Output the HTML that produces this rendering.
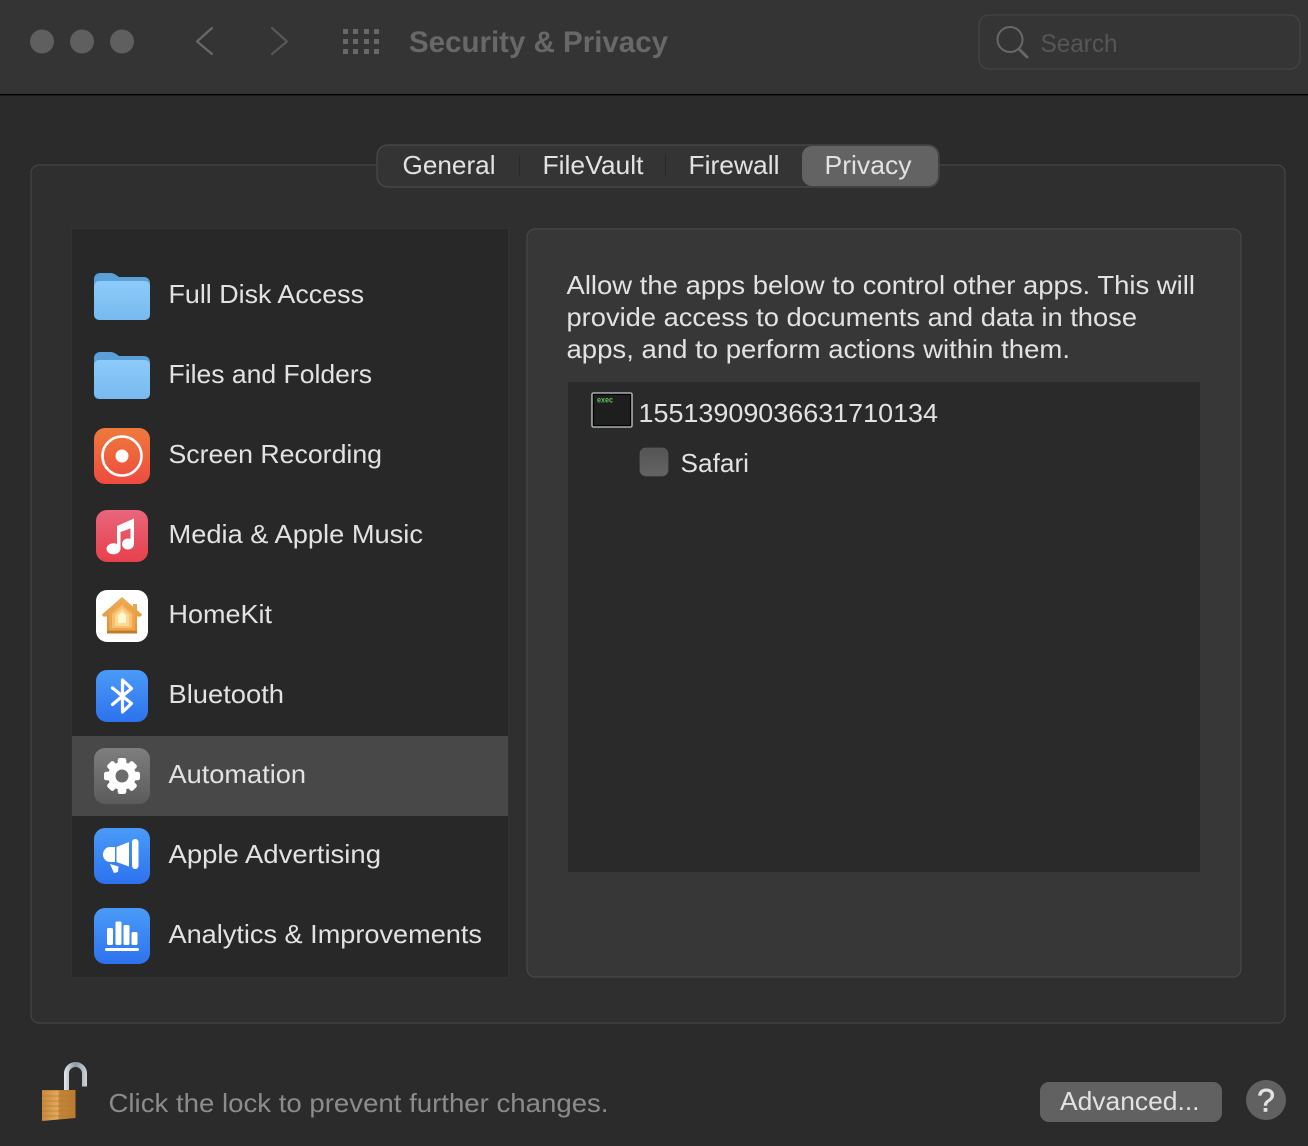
<!DOCTYPE html>
<html><head><meta charset="utf-8"><style>
html,body{margin:0;padding:0;background:#2a2a2a;width:1308px;height:1146px;overflow:hidden}
svg{display:block}
text{font-family:"Liberation Sans",sans-serif;font-size:26px;fill:#e2e2e2}
</style></head><body>
<svg width="1308" height="1146" viewBox="0 0 1308 1146" xmlns="http://www.w3.org/2000/svg">
<defs>
<linearGradient id="fold" x1="0" y1="0" x2="0" y2="1"><stop offset="0" stop-color="#8ccbfa"/><stop offset="1" stop-color="#77baef"/></linearGradient>
<linearGradient id="rec" x1="0" y1="0" x2="0" y2="1"><stop offset="0" stop-color="#ee7a3c"/><stop offset="1" stop-color="#ee4b40"/></linearGradient>
<linearGradient id="mus" x1="0" y1="0" x2="0" y2="1"><stop offset="0" stop-color="#e9667c"/><stop offset="1" stop-color="#e8404c"/></linearGradient>
<linearGradient id="blu" x1="0" y1="0" x2="0" y2="1"><stop offset="0" stop-color="#4a9bf8"/><stop offset="1" stop-color="#2d72ee"/></linearGradient>
<linearGradient id="gear" x1="0" y1="0" x2="0" y2="1"><stop offset="0" stop-color="#7e7e7e"/><stop offset="1" stop-color="#5b5b5b"/></linearGradient>
<linearGradient id="home" x1="0" y1="0" x2="0" y2="1"><stop offset="0" stop-color="#f0ac56"/><stop offset="1" stop-color="#dc9136"/></linearGradient>
<linearGradient id="lockb" x1="0" y1="0" x2="1" y2="0"><stop offset="0" stop-color="#c98a3c"/><stop offset=".47" stop-color="#e2aa5e"/><stop offset=".52" stop-color="#c48539"/><stop offset="1" stop-color="#b97b31"/></linearGradient>
<linearGradient id="shack" x1="0" y1="0" x2="1" y2="0"><stop offset="0" stop-color="#e4eaef"/><stop offset=".5" stop-color="#8d9aa5"/><stop offset="1" stop-color="#cdd5da"/></linearGradient>
<linearGradient id="chk" x1="0" y1="0" x2="0" y2="1"><stop offset="0" stop-color="#545454"/><stop offset="1" stop-color="#646464"/></linearGradient>
<g id="folder">
<path d="M0 6a6 6 0 0 1 6-6h10c3 0 5 1 7 2.500l2 1.500h25a6 6 0 0 1 6 6v30H0z" fill="#5a9fd8"/>
<rect x="0" y="8" width="56" height="39" rx="5" fill="url(#fold)"/>
</g>
</defs>

<rect width="1308" height="1146" fill="#2b2b2b"/>
<rect width="1308" height="94" fill="#343434"/>
<rect y="94" width="1308" height="1.4" fill="#000"/>

<circle cx="42" cy="41.500" r="12" fill="#5f5f5f"/>
<circle cx="82" cy="41.500" r="12" fill="#5f5f5f"/>
<circle cx="122" cy="41.500" r="12" fill="#5f5f5f"/>
<path d="M212 28 197 41.500 212 54" fill="none" stroke="#686868" stroke-width="2.200" stroke-linecap="round" stroke-linejoin="round"/>
<path d="M272 28 287 41.500 272 54" fill="none" stroke="#575757" stroke-width="2.200" stroke-linecap="round" stroke-linejoin="round"/>
<g fill="#686868">
<rect x="343" y="29" width="5" height="5"/><rect x="353" y="29" width="5" height="5"/><rect x="364" y="29" width="5" height="5"/><rect x="374" y="29" width="5" height="5"/>
<rect x="343" y="39" width="5" height="5"/><rect x="353" y="39" width="5" height="5"/><rect x="364" y="39" width="5" height="5"/><rect x="374" y="39" width="5" height="5"/>
<rect x="343" y="49" width="5" height="5"/><rect x="353" y="49" width="5" height="5"/><rect x="364" y="49" width="5" height="5"/><rect x="374" y="49" width="5" height="5"/>
</g>
<text x="409" y="52" textLength="259" lengthAdjust="spacingAndGlyphs" style="font-size:30px;font-weight:bold;fill:#686868">Security &amp; Privacy</text>

<rect x="979" y="15" width="321" height="54" rx="10" fill="#353535" stroke="#424242" stroke-width="1.500"/>
<circle cx="1010" cy="39.500" r="12.500" fill="none" stroke="#686868" stroke-width="2"/>
<path d="M1019 49 1027 57" stroke="#686868" stroke-width="2.800" stroke-linecap="round"/>
<text x="1040.500" y="52" textLength="77" lengthAdjust="spacingAndGlyphs" style="font-size:25px;fill:#565656">Search</text>

<rect x="31" y="165" width="1254" height="858" rx="8" fill="#2f2f2f" stroke="#454545" stroke-width="1.200"/>

<rect x="377" y="145" width="562" height="42" rx="11" fill="#343434" stroke="#4a4a4a" stroke-width="1.200"/>
<rect x="519" y="155" width="1" height="22" fill="#292929"/>
<rect x="665" y="155" width="1" height="22" fill="#292929"/>
<rect x="802" y="146" width="136" height="40" rx="10" fill="#636363"/>
<text x="402.500" y="174" textLength="93" lengthAdjust="spacingAndGlyphs">General</text>
<text x="542.500" y="174" textLength="101" lengthAdjust="spacingAndGlyphs">FileVault</text>
<text x="688.500" y="174" textLength="91" lengthAdjust="spacingAndGlyphs">Firewall</text>
<text x="824.500" y="174" textLength="87" lengthAdjust="spacingAndGlyphs">Privacy</text>

<rect x="71.500" y="228.500" width="437" height="749" fill="#282828" stroke="#333" stroke-width="1"/>
<rect x="72" y="736" width="436" height="80" fill="#484848"/>

<g transform="translate(94,273)"><use href="#folder"/></g>
<g transform="translate(94,352)"><use href="#folder"/></g>

<rect x="94" y="428" width="56" height="56" rx="11" fill="url(#rec)"/>
<circle cx="122" cy="456" r="19.500" fill="none" stroke="#fff" stroke-width="2.600"/>
<circle cx="122" cy="456" r="6.500" fill="#fff"/>

<rect x="96" y="510" width="52" height="52" rx="11" fill="url(#mus)"/>
<path d="M117 526 134 518.500V544a6 5.500 0 1 1-3.500-5V528.500L120.500 532V549a7 5.500 0 1 1-3.500-5z" fill="#fff"/>

<rect x="96" y="590" width="52" height="52" rx="11" fill="#fff"/>
<path d="M122 597 133 606.500V604H137V610L142 614.500 141 616.500H137V632H107V616.500H103L102 614.500z" fill="url(#home)"/>
<path d="M122 601.500 135 613V630H109V613z" fill="#eea54c"/>
<path d="M122 605 132 614V628H112V614z" fill="#f5c070"/>
<path d="M122 608.500 129 615V626H115V615z" fill="#fada92"/>
<path d="M122 612 126 615.500V623H118V615.500z" fill="#fff6d2"/>
<rect x="107" y="631" width="30" height="2.500" fill="#c07a2c"/>

<rect x="96" y="670" width="52" height="52" rx="11" fill="url(#blu)"/>
<path d="M112.500 688 131.500 703.500 122.500 712V680L131.500 688.500 112.500 704.500" fill="none" stroke="#fff" stroke-width="3.200" stroke-linecap="round" stroke-linejoin="round"/>

<rect x="94" y="748" width="56" height="56" rx="11" fill="url(#gear)"/>
<g fill="#fff" transform="translate(122,776)">
<circle r="14"/>
<g id="t"><rect x="-4.300" y="-18" width="8.600" height="8" rx="2.200"/></g>
<use href="#t" transform="rotate(45)"/><use href="#t" transform="rotate(90)"/><use href="#t" transform="rotate(135)"/><use href="#t" transform="rotate(180)"/><use href="#t" transform="rotate(225)"/><use href="#t" transform="rotate(270)"/><use href="#t" transform="rotate(315)"/>
<circle r="6.500" fill="#6c6c6c"/>
</g>

<rect x="94" y="828" width="56" height="56" rx="11" fill="url(#blu)"/>
<path d="M115 847V862H110a7 7.500 0 0 1 0-15z" fill="#fff"/>
<path d="M116.500 847 129 842V866.500L116.500 862z" fill="#fff"/>
<rect x="132" y="839" width="6.500" height="30" rx="3.200" fill="#fff"/>
<path d="M110 864 118.500 866.500 118 872 114 873z" fill="#fff"/>

<rect x="94" y="908" width="56" height="56" rx="11" fill="url(#blu)"/>
<g fill="#fff">
<rect x="107" y="928" width="6" height="17" rx="1.500"/>
<rect x="115.500" y="921.500" width="6" height="23.500" rx="1.500"/>
<rect x="123.500" y="925" width="6" height="20" rx="1.500"/>
<rect x="131.500" y="932" width="6" height="13" rx="1.500"/>
<rect x="105" y="948" width="34" height="3" rx="1.500"/>
</g>

<g>
<text x="168.500" y="303" textLength="195.500" lengthAdjust="spacingAndGlyphs">Full Disk Access</text>
<text x="168.500" y="383" textLength="203.500" lengthAdjust="spacingAndGlyphs">Files and Folders</text>
<text x="168.500" y="463" textLength="213.500" lengthAdjust="spacingAndGlyphs">Screen Recording</text>
<text x="168.500" y="543" textLength="254.500" lengthAdjust="spacingAndGlyphs">Media &amp; Apple Music</text>
<text x="168.500" y="623" textLength="103.500" lengthAdjust="spacingAndGlyphs">HomeKit</text>
<text x="168.500" y="703" textLength="115.500" lengthAdjust="spacingAndGlyphs">Bluetooth</text>
<text x="168.500" y="783" textLength="137.500" lengthAdjust="spacingAndGlyphs">Automation</text>
<text x="168.500" y="863" textLength="212.500" lengthAdjust="spacingAndGlyphs">Apple Advertising</text>
<text x="168.500" y="943" textLength="313.500" lengthAdjust="spacingAndGlyphs">Analytics &amp; Improvements</text>
</g>

<rect x="527" y="229" width="714" height="748" rx="8" fill="#373737" stroke="#484848" stroke-width="1.200"/>
<text x="566.500" y="294" textLength="628.500" lengthAdjust="spacingAndGlyphs">Allow the apps below to control other apps. This will</text>
<text x="566.500" y="326" textLength="570.500" lengthAdjust="spacingAndGlyphs">provide access to documents and data in those</text>
<text x="566.500" y="358" textLength="503.500" lengthAdjust="spacingAndGlyphs">apps, and to perform actions within them.</text>

<rect x="568" y="382" width="632" height="490" fill="#2a2a2a"/>
<rect x="592" y="393" width="40" height="34" rx="1.500" fill="#161616" stroke="#a9b1b5" stroke-width="1.600"/>
<rect x="593.500" y="394.500" width="37" height="31" fill="#1e1e1e" stroke="#000" stroke-width="1.200"/>
<text x="597" y="402.500" textLength="16" lengthAdjust="spacingAndGlyphs" style="font-size:8px;font-weight:bold;fill:#5fc25f">exec</text>
<text x="638.500" y="422" textLength="299.500" lengthAdjust="spacingAndGlyphs">15513909036631710134</text>
<rect x="640" y="448" width="28" height="28" rx="6" fill="url(#chk)" stroke="#5e5e5e" stroke-width=".8"/>
<text x="680.500" y="472" textLength="68.500" lengthAdjust="spacingAndGlyphs">Safari</text>

<path d="M64 1090V1073.500a11.500 11.500 0 0 1 23 0V1086.500H82V1073.500a6.500 6.500 0 0 0-13 0V1090z" fill="url(#shack)"/>
<path d="M42 1090H75.500V1118L42 1121z" fill="url(#lockb)"/>
<g stroke="#b87a2e" stroke-width="1" opacity=".7">
<path d="M42 1090.500H75.500M42 1096H75.500M42 1101H75.500M42 1106H75.500M42 1111H75.500M42 1116H75.500"/>
</g>
<text x="108.500" y="1112" textLength="500" lengthAdjust="spacingAndGlyphs" style="fill:#8c8c8c">Click the lock to prevent further changes.</text>

<rect x="1040" y="1082" width="182" height="40" rx="9" fill="#616161"/>
<text x="1060" y="1110" textLength="139.500" lengthAdjust="spacingAndGlyphs">Advanced...</text>
<circle cx="1266" cy="1100" r="20" fill="#616161"/>
<text x="1266" y="1111.500" text-anchor="middle" style="font-size:32px;stroke:#e2e2e2;stroke-width:.6">?</text>
</svg>
</body></html>
